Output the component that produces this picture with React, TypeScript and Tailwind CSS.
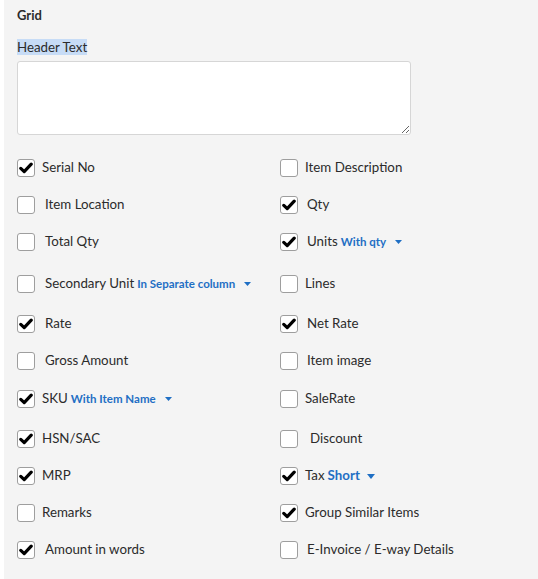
import React from 'react';

type Opt = {
  label: string;
  checked: boolean;
  pad: number; // extra space before label text
  extra?: string;
  extraBig?: boolean;
};

type Row = { mt: string; left: Opt; right: Opt };

const rows: Row[] = [
  {
    mt: 'mt-0',
    left: { label: 'Serial No', checked: true, pad: 0 },
    right: { label: 'Item Description', checked: false, pad: 0 },
  },
  {
    mt: 'mt-[19px]',
    left: { label: 'Item Location', checked: false, pad: 3 },
    right: { label: 'Qty', checked: true, pad: 2 },
  },
  {
    mt: 'mt-[19px]',
    left: { label: 'Total Qty', checked: false, pad: 3 },
    right: { label: 'Units', checked: true, pad: 2, extra: 'With qty' },
  },
  {
    mt: 'mt-[24px]',
    left: { label: 'Secondary Unit', checked: false, pad: 3, extra: 'In Separate column' },
    right: { label: 'Lines', checked: false, pad: 0 },
  },
  {
    mt: 'mt-[22px]',
    left: { label: 'Rate', checked: true, pad: 3 },
    right: { label: 'Net Rate', checked: true, pad: 2 },
  },
  {
    mt: 'mt-[19px]',
    left: { label: 'Gross Amount', checked: false, pad: 3 },
    right: { label: 'Item image', checked: false, pad: 2 },
  },
  {
    mt: 'mt-[20px]',
    left: { label: 'SKU', checked: true, pad: 0, extra: 'With Item Name' },
    right: { label: 'SaleRate', checked: false, pad: 0 },
  },
  {
    mt: 'mt-[22px]',
    left: { label: 'HSN/SAC', checked: true, pad: 0 },
    right: { label: 'Discount', checked: false, pad: 5 },
  },
  {
    mt: 'mt-[19px]',
    left: { label: 'MRP', checked: true, pad: 0 },
    right: { label: 'Tax', checked: true, pad: 0, extra: 'Short', extraBig: true },
  },
  {
    mt: 'mt-[19px]',
    left: { label: 'Remarks', checked: false, pad: 0 },
    right: { label: 'Group Similar Items', checked: true, pad: 0 },
  },
  {
    mt: 'mt-[19px]',
    left: { label: 'Amount in words', checked: true, pad: 3 },
    right: { label: 'E-Invoice / E-way Details', checked: false, pad: 2 },
  },
];

function Box({ checked }: { checked: boolean }) {
  return (
    <span className="flex h-[18px] w-[18px] shrink-0 items-center justify-center rounded-[3px] border border-[#9e9e9e] bg-white">
      {checked && (
        <svg width="14" height="12" viewBox="0 0 14 12">
          <path d="M1.8 6.4 L5.2 9.6 L12.2 2.2" fill="none" stroke="#000" strokeWidth="3.2" strokeLinecap="round" strokeLinejoin="round" />
        </svg>
      )}
    </span>
  );
}

function Caret({ big }: { big?: boolean }) {
  return big ? (
    <svg width="8" height="5" viewBox="0 0 8 5" className="ml-[7px]">
      <path d="M0 0 H8 L4 5 Z" fill="#1f6fc4" />
    </svg>
  ) : (
    <svg width="7" height="4" viewBox="0 0 7 4" className="ml-[9px]">
      <path d="M0 0 H7 L3.5 4 Z" fill="#1f6fc4" />
    </svg>
  );
}

function Option({ opt }: { opt: Opt }) {
  return (
    <div className="flex h-[18px] items-center">
      <Box checked={opt.checked} />
      <span className="ml-[7px] flex items-center whitespace-nowrap text-[13.3px] text-[#2b2b2b]" style={{ paddingLeft: opt.pad }}>
        {opt.label}
        {opt.extra && (
          <>
            <span
              className={
                opt.extraBig
                  ? 'ml-[3px] text-[13.3px] font-bold text-[#1f6fc4]'
                  : 'ml-[3px] text-[11.5px] font-bold text-[#1f6fc4]'
              }
            >
              {opt.extra}
            </span>
            <Caret big={opt.extraBig} />
          </>
        )}
      </span>
    </div>
  );
}

export default function App() {
  return (
    <div className="h-[579px] w-[538px] bg-white pl-[4px] font-['Lato','Liberation_Sans',sans-serif]">
      <div className="h-full bg-[#f4f4f4] pl-[13px] pt-[6px]">
        <h2 className="text-[13px] font-bold leading-[18px] text-[#2b2b2b]">Grid</h2>
        <div className="mt-[10px]">
          <span className="bg-[#c7dcf6] text-[13.3px] leading-[18px] text-[#2b2b2b]">Header Text</span>
        </div>
        <textarea className="mt-[3px] block h-[74px] w-[394px] rounded-[3px] border border-[#d6d6d6] bg-white" />
        <div className="mt-[24px]">
          {rows.map((r) => (
            <div key={r.left.label} className={`grid grid-cols-[263px_1fr] ${r.mt}`}>
              <Option opt={r.left} />
              <Option opt={r.right} />
            </div>
          ))}
        </div>
      </div>
    </div>
  );
}
